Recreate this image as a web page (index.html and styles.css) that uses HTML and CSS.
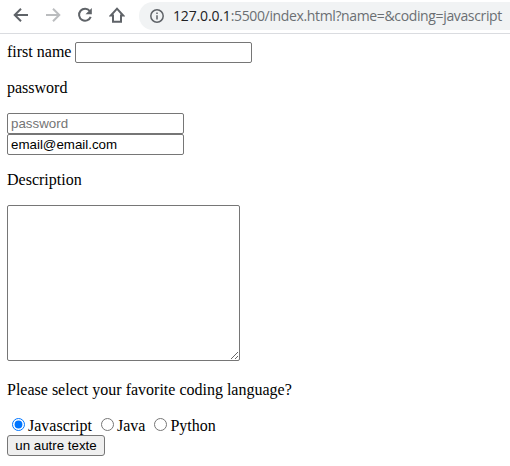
FILE: index.html
```html
<!DOCTYPE html>
<html lang="en">
<head>
<meta charset="utf-8">
<title>Form</title>
<link rel="stylesheet" href="styles.css">
</head>
<body>
<header class="toolbar">
  <svg class="icon" viewBox="0 0 16 16"><path d="M15 8H2M8 1.7L1.7 8L8 14.3"/></svg>
  <svg class="icon icon-disabled" viewBox="0 0 16 16"><path d="M1 8H14M8 1.7L14.3 8L8 14.3"/></svg>
  <svg class="icon" viewBox="0 0 16 16"><path d="M12.8 4A6 6 0 1 0 13.7 9.8"/><path class="solid" d="M14.8 1V7.3H8.5Z"/></svg>
  <svg class="icon" viewBox="0 0 16 16"><path d="M1.8 8.5H4V14.8H12V8.5H14.2L8 1.7Z"/></svg>
  <div class="address">
    <svg class="info" viewBox="0 0 14 14"><circle cx="7" cy="7" r="6.2"/><path d="M7 6.2V10.5M7 3.5V5"/></svg>
    <span class="url"><span class="host">127.0.0.1</span>:5500/index.html?name=&amp;coding=javascript</span>
  </div>
</header>
<form class="page">
  <div class="row"><label for="name">first name</label> <input class="field" id="name" type="text"></div>
  <p>password</p>
  <div class="stack">
    <input class="field" type="password" placeholder="password">
    <input class="field" type="email" value="email@email.com">
  </div>
  <p>Description</p>
  <textarea class="description"></textarea>
  <p>Please select your favorite coding language?</p>
  <div class="choices">
    <label class="choice"><input type="radio" name="coding" checked>Javascript</label>
    <label class="choice"><input type="radio" name="coding">Java</label>
    <label class="choice"><input type="radio" name="coding">Python</label>
  </div>
  <button class="submit" type="button">un autre texte</button>
</form>
</body>
</html>
```
FILE: styles.css
```css
* { box-sizing: border-box; }
body {
  margin: 0;
  background: #fff;
  color: #000;
  font: 16px/18px "Liberation Serif", serif;
  overflow: hidden;
}
.toolbar {
  display: flex;
  align-items: center;
  height: 34px;
  padding: 0 0 3px 13px;
  border-bottom: 1px solid #dadce0;
}
.icon {
  flex: none;
  width: 16px;
  height: 16px;
  margin-right: 16px;
  fill: none;
  stroke: #5f6368;
  stroke-width: 2;
}
.icon-disabled { stroke: #bbbdbf; }
.solid { fill: #5f6368; stroke: none; }
.address {
  display: flex;
  align-items: center;
  flex: 1;
  min-width: 0;
  height: 28px;
  margin: 1px 0 0 -2px;
  padding-left: 11px;
  border-radius: 14px 0 0 14px;
  background: #f1f3f4;
  white-space: nowrap;
}
.info {
  flex: none;
  width: 14px;
  height: 14px;
  margin-right: 9px;
  fill: none;
  stroke: #5f6368;
  stroke-width: 1.5;
}
.url {
  color: #6b6f73;
  font: 14px/20px "Open Sans", sans-serif;
  letter-spacing: -0.36px;
}
.host { color: #202124; letter-spacing: -0.15px; }
.page { padding: 8px 7px 0; }
.row { display: flex; height: 21px; gap: 4px; line-height: 20px; }
p { margin: 16px 0; }
.field {
  width: 177px;
  height: 21px;
  margin: 0;
  padding: 1px 2px 1px 3px;
  border: 1px solid #767676;
  border-radius: 2px;
  font: 13.333px "Liberation Sans", sans-serif;
}
.stack { display: flex; flex-direction: column; }
.description {
  display: block;
  width: 233px;
  height: 156px;
  margin: 0 0 20px;
  border: 1px solid #767676;
  border-radius: 2px;
}
.choices { display: flex; height: 20px; gap: 4px; }
.choice { display: flex; line-height: 22px; }
.choice input { width: 13px; height: 13px; margin: 3px 3px 0 5px; }
.submit {
  display: block;
  width: 98px;
  height: 21px;
  padding: 0;
  border: 1px solid #767676;
  border-radius: 3px;
  background: #efefef;
  color: #000;
  font: 13.333px "Liberation Sans", sans-serif;
}
```
